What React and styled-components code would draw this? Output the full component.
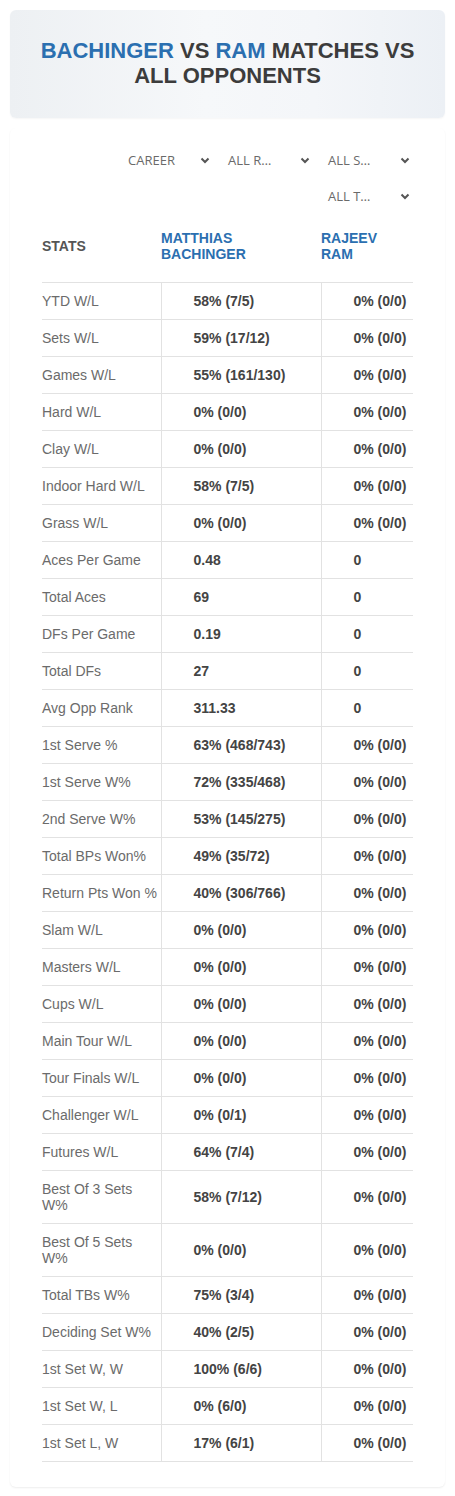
import React from 'react';
import styled, { createGlobalStyle } from 'styled-components';

const GlobalStyle = createGlobalStyle`
  body {
    margin: 0;
    background: #fff;
    font-family: "Liberation Sans", Arial, sans-serif;
  }
`;

const Page = styled.div`
  padding: 10px;
`;

const TitleCard = styled.header`
  border-radius: 6px;
  padding: 28px 16px 30px;
  background: linear-gradient(90deg, #edf0f3 0%, #f6f8fa 45%, #f4f6f9 70%, #ecf0f5 100%);
  box-shadow: 0 1px 2px rgba(0, 0, 0, 0.04);
`;

const Title = styled.h1`
  margin: 0;
  text-align: center;
  font-size: 22px;
  line-height: 25px;
  font-weight: 700;
  color: #3c3c3c;
  text-transform: uppercase;
`;

const Blue = styled.span`
  color: #2b6fb0;
`;

const StatsCard = styled.section`
  margin-top: 10px;
  padding: 14px 32px 25px;
  border-radius: 6px;
  background: #fff;
  box-shadow: 0 1px 2px rgba(0, 0, 0, 0.07);
`;

const Filters = styled.div`
  display: flex;
  flex-wrap: wrap;
  justify-content: flex-end;
  column-gap: 12px;
`;

const Select = styled.div`
  width: 88px;
  height: 36px;
  box-sizing: border-box;
  padding: 0 3px 0 3px;
  display: flex;
  align-items: center;
  justify-content: space-between;
  font-family: "Open Sans", "Liberation Sans", sans-serif;
  font-size: 13px;
  color: #6a6a6a;
`;

const Chevron = () => (
  <svg width="10" height="7" viewBox="0 0 10 7">
    <polyline points="1.5,1.5 5,5 8.5,1.5" fill="none" stroke="#555" strokeWidth="2" />
  </svg>
);

const Table = styled.table`
  width: 100%;
  border-collapse: collapse;
  table-layout: fixed;
`;

const HeadCell = styled.th`
  height: 64px;
  padding: 0 0 4px;
  text-align: left;
  vertical-align: middle;
  font-size: 14px;
  line-height: 16px;
  font-weight: 700;
  text-transform: uppercase;
  color: ${p => (p.$blue ? '#2b6fb0' : '#555')};
  width: ${p => p.$w};
`;

const Name = styled.span`
  display: block;
  width: min-content;
`;

const Row = styled.tr`
  border-top: 1px solid #e2e2e2;
  border-bottom: 1px solid #e2e2e2;
`;

const Label = styled.td`
  padding: 10px 0;
  font-size: 14px;
  line-height: 16px;
  color: #6b6b6b;
`;

const Value = styled.td`
  padding: 10px 0 10px 32px;
  border-left: 1px solid #e2e2e2;
  font-size: 14px;
  line-height: 16px;
  font-weight: 700;
  color: #444;
  white-space: nowrap;
`;

const stats = [
  ['YTD W/L', '58% (7/5)', '0% (0/0)'],
  ['Sets W/L', '59% (17/12)', '0% (0/0)'],
  ['Games W/L', '55% (161/130)', '0% (0/0)'],
  ['Hard W/L', '0% (0/0)', '0% (0/0)'],
  ['Clay W/L', '0% (0/0)', '0% (0/0)'],
  ['Indoor Hard W/L', '58% (7/5)', '0% (0/0)'],
  ['Grass W/L', '0% (0/0)', '0% (0/0)'],
  ['Aces Per Game', '0.48', '0'],
  ['Total Aces', '69', '0'],
  ['DFs Per Game', '0.19', '0'],
  ['Total DFs', '27', '0'],
  ['Avg Opp Rank', '311.33', '0'],
  ['1st Serve %', '63% (468/743)', '0% (0/0)'],
  ['1st Serve W%', '72% (335/468)', '0% (0/0)'],
  ['2nd Serve W%', '53% (145/275)', '0% (0/0)'],
  ['Total BPs Won%', '49% (35/72)', '0% (0/0)'],
  ['Return Pts Won %', '40% (306/766)', '0% (0/0)'],
  ['Slam W/L', '0% (0/0)', '0% (0/0)'],
  ['Masters W/L', '0% (0/0)', '0% (0/0)'],
  ['Cups W/L', '0% (0/0)', '0% (0/0)'],
  ['Main Tour W/L', '0% (0/0)', '0% (0/0)'],
  ['Tour Finals W/L', '0% (0/0)', '0% (0/0)'],
  ['Challenger W/L', '0% (0/1)', '0% (0/0)'],
  ['Futures W/L', '64% (7/4)', '0% (0/0)'],
  ['Best Of 3 Sets W%', '58% (7/12)', '0% (0/0)'],
  ['Best Of 5 Sets W%', '0% (0/0)', '0% (0/0)'],
  ['Total TBs W%', '75% (3/4)', '0% (0/0)'],
  ['Deciding Set W%', '40% (2/5)', '0% (0/0)'],
  ['1st Set W, W', '100% (6/6)', '0% (0/0)'],
  ['1st Set W, L', '0% (6/0)', '0% (0/0)'],
  ['1st Set L, W', '17% (6/1)', '0% (0/0)'],
];

const filters = ['CAREER', 'ALL R…', 'ALL S…', 'ALL T…'];

const App = () => (
  <Page>
    <GlobalStyle />
    <TitleCard>
      <Title>
        <Blue>Bachinger</Blue> vs <Blue>Ram</Blue> matches vs all opponents
      </Title>
    </TitleCard>
    <StatsCard>
      <Filters>
        {filters.map(f => (
          <Select key={f}>
            {f}
            <Chevron />
          </Select>
        ))}
      </Filters>
      <Table>
        <thead>
          <tr>
            <HeadCell $w="119px">Stats</HeadCell>
            <HeadCell $w="160px" $blue><Name>Matthias Bachinger</Name></HeadCell>
            <HeadCell $blue><Name>Rajeev Ram</Name></HeadCell>
          </tr>
        </thead>
        <tbody>
          {stats.map(([label, a, b]) => (
            <Row key={label}>
              <Label>{label}</Label>
              <Value>{a}</Value>
              <Value>{b}</Value>
            </Row>
          ))}
        </tbody>
      </Table>
    </StatsCard>
  </Page>
);

export default App;
